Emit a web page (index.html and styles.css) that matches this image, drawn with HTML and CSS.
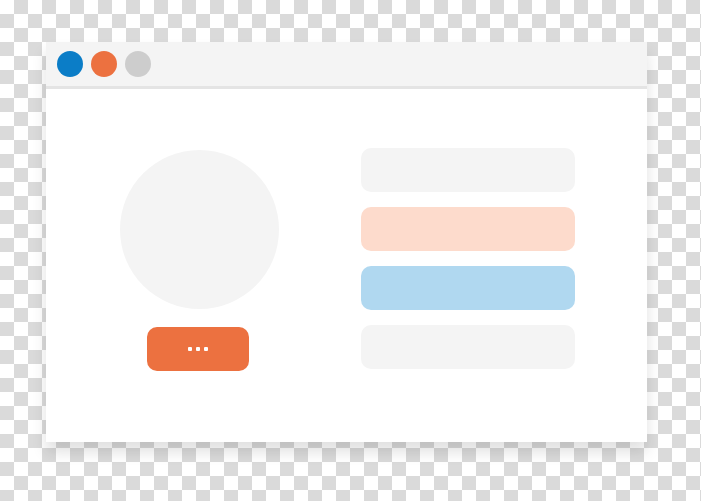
FILE: index.html
```html
<!DOCTYPE html>
<html lang="en">

<head>
    <meta charset="UTF-8">
    <meta name="viewport" content="width=device-width, initial-scale=1.0">
    <title>Profile window</title>
    <link rel="stylesheet" href="styles.css">
</head>

<body>
    <!-- Browser window -->
    <div class="window">
        <div class="title-bar">
            <span class="dot dot-blue"></span>
            <span class="dot dot-orange"></span>
            <span class="dot dot-gray"></span>
        </div>

        <div class="window-body">
            <!-- Avatar + button -->
            <div class="profile">
                <div class="avatar"></div>
                <button class="more-btn" aria-label="More">
                    <span></span><span></span><span></span>
                </button>
            </div>

            <!-- Placeholder rows -->
            <div class="rows">
                <div class="row row-gray"></div>
                <div class="row row-peach"></div>
                <div class="row row-blue"></div>
                <div class="row row-gray"></div>
            </div>
        </div>
    </div>
</body>

</html>
```

FILE: styles.css
```css
/* Transparent-looking checker background */
html {
    background: #fff repeating-conic-gradient(#dadada 0 25%, #fff 0 50%) 0 0 / 28px 28px;
}

body {
    margin: 0;
    padding: 42px 0 0 46px;
    font-family: 'Liberation Sans', Arial, sans-serif;
    min-height: 501px;
    box-sizing: border-box;
}

.window {
    width: 601px;
    height: 400px;
    background-color: white;
    box-shadow: 0 10px 14px rgba(0, 0, 0, 0.12);
    display: flex;
    flex-direction: column;
}

.title-bar {
    height: 44px;
    background-color: #f4f4f4;
    border-bottom: 3px solid #e4e4e4;
    display: flex;
    align-items: center;
    gap: 8px;
    padding-left: 11px;
}

.dot {
    width: 26px;
    height: 26px;
    border-radius: 50%;
}

.dot-blue {
    background-color: #0b7dc7;
}

.dot-orange {
    background-color: #ec7140;
}

.dot-gray {
    background-color: #cdcdcd;
}

.window-body {
    flex: 1;
    display: flex;
    padding: 59px 0 0 74px;
    gap: 82px;
}

.profile {
    width: 159px;
    display: flex;
    flex-direction: column;
    align-items: flex-start;
    gap: 18px;
    padding-top: 2px;
}

.avatar {
    width: 159px;
    height: 159px;
    border-radius: 50%;
    background-color: #f4f4f4;
}

.more-btn {
    width: 102px;
    height: 44px;
    margin-left: 27px;
    border: none;
    border-radius: 10px;
    background-color: #ec7140;
    display: flex;
    justify-content: center;
    align-items: center;
    gap: 4px;
    padding: 0;
    cursor: pointer;
}

.more-btn span {
    width: 4px;
    height: 4px;
    border-radius: 1px;
    background-color: white;
}

.rows {
    width: 214px;
    display: flex;
    flex-direction: column;
    gap: 15px;
}

.row {
    height: 44px;
    border-radius: 10px;
}

.row-gray {
    background-color: #f4f4f4;
}

.row-peach {
    background-color: #fddbcc;
}

.row-blue {
    background-color: #b0d8f0;
}
```
